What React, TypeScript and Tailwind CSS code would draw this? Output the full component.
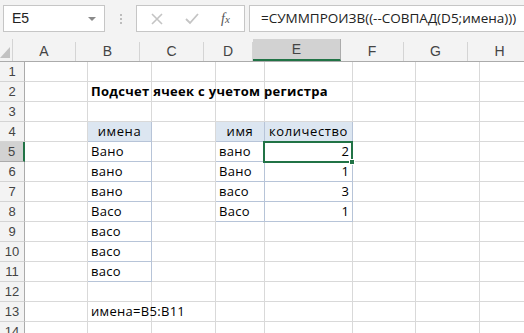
import React from "react";

const cols = [
  { id: "A", w: 63 },
  { id: "B", w: 64 },
  { id: "C", w: 64 },
  { id: "D", w: 49 },
  { id: "E", w: 88 },
  { id: "F", w: 63 },
  { id: "G", w: 64 },
  { id: "H", w: 64 },
];

type Cell = { text: string; align?: "left" | "center" | "right"; bold?: boolean; head?: boolean };

const data: Record<string, Cell> = {
  B2: { text: "Подсчет ячеек с учетом регистра", bold: true },
  B4: { text: "имена", align: "center", head: true },
  D4: { text: "имя", align: "center", head: true },
  E4: { text: "количество", align: "center", head: true },
  B5: { text: "Вано" },
  B6: { text: "вано" },
  B7: { text: "вано" },
  B8: { text: "Васо" },
  B9: { text: "васо" },
  B10: { text: "васо" },
  B11: { text: "васо" },
  D5: { text: "вано" },
  D6: { text: "Вано" },
  D7: { text: "васо" },
  D8: { text: "Васо" },
  E5: { text: "2", align: "right" },
  E6: { text: "1", align: "right" },
  E7: { text: "3", align: "right" },
  E8: { text: "1", align: "right" },
  B13: { text: "имена=B5:B11" },
};

const rows = Array.from({ length: 14 }, (_, i) => i + 1);

function cellBorders(col: string, row: number) {
  // table borders (blue-grey) for the two little tables
  let cls = "border-r border-b border-[#d9d9d9]";
  if (col === "B" && row >= 4 && row <= 11) cls = "border-r border-b border-[#b7c4d8]";
  if ((col === "D" || col === "E") && row >= 4 && row <= 8) cls = "border-r border-b border-[#b7c4d8]";
  return cls;
}

export default function App() {
  return (
    <div className="w-[524px] h-[333px] overflow-hidden bg-white font-['Open_Sans',sans-serif] text-black">
      {/* formula bar */}
      <div className="h-[39px] bg-[#f3f3f3] flex items-start pt-[5px] pl-[3px]">
        <div className="w-[102px] h-[27px] bg-white border border-[#c6c6c6] flex items-center justify-between px-[8px]">
          <span className="text-[14px] text-[#222] font-['Liberation_Sans',sans-serif]">E5</span>
          <span className="w-0 h-0 border-l-[4px] border-r-[4px] border-t-[4px] border-l-transparent border-r-transparent border-t-[#8a8a8a]" />
        </div>
        <div className="w-[31px] h-[27px] flex flex-col items-center justify-center gap-[2px]">
          <span className="w-[2px] h-[2px] bg-[#bdbdbd]" />
          <span className="w-[2px] h-[2px] bg-[#bdbdbd]" />
          <span className="w-[2px] h-[2px] bg-[#bdbdbd]" />
        </div>
        <div className="w-[109px] h-[27px] bg-white border border-[#c6c6c6] flex items-center">
          <svg width="12" height="12" viewBox="0 0 12 12" className="ml-[14px]">
            <path d="M1 1 L11 11 M11 1 L1 11" stroke="#c4c4c4" strokeWidth="1.6" fill="none" />
          </svg>
          <svg width="14" height="12" viewBox="0 0 14 12" className="ml-[22px]">
            <path d="M1 6 L5 10 L13 1" stroke="#c4c4c4" strokeWidth="1.8" fill="none" />
          </svg>
          <span className="ml-[22px] text-[14px] italic text-[#555] font-['Liberation_Serif',serif]">
            f<span className="text-[11px]">x</span>
          </span>
        </div>
        <div className="ml-[4px] flex-1 h-[27px] bg-white border border-[#c6c6c6] border-r-0 flex items-center pl-[11px]">
          <span className="text-[13.5px] text-[#222] whitespace-nowrap">
            =СУММПРОИЗВ((--СОВПАД(D5;имена)))
          </span>
        </div>
      </div>

      {/* column headers */}
      <div className="flex h-[23px] bg-[#f3f3f3] border-b border-[#ababab]">
        <div className="w-[25px] h-full border-r border-[#d4d4d4] flex items-end justify-end pr-[2px] pb-[3px]">
          <svg width="10" height="11" viewBox="0 0 10 11">
            <path d="M10 0 L10 11 L0 11 Z" fill="#c2c2c2" />
          </svg>
        </div>
        {cols.map((c) => (
          <div
            key={c.id}
            style={{ width: c.w }}
            className={
              "shrink-0 flex items-center justify-center text-[14px] text-[#444] font-['Liberation_Sans',sans-serif] " +
              (c.id === "E"
                ? "bg-[#d2d2d2] border-b-2 border-b-[#217346] border-r border-r-[#ababab]"
                : "border-r border-[#d4d4d4] mt-[3px]")
            }
          >
            {c.id}
          </div>
        ))}
      </div>

      {/* grid */}
      {rows.map((r) => (
        <div key={r} className="flex h-[20px]">
          <div
            className={
              "w-[25px] shrink-0 flex items-center justify-center text-[13px] text-[#444] font-['Liberation_Sans',sans-serif] border-b " +
              (r === 5
                ? "bg-[#d2d2d2] border-b-[#ababab] border-r-2 border-r-[#217346]"
                : "bg-[#f3f3f3] border-b-[#d4d4d4] border-r border-r-[#ababab]")
            }
          >
            {r}
          </div>
          {cols.map((c) => {
            const cell = data[c.id + r];
            const align = cell?.align ?? "left";
            return (
              <div
                key={c.id}
                style={{ width: c.w }}
                className={
                  "relative shrink-0 flex items-center overflow-visible whitespace-nowrap text-[13px] px-[3px] " +
                  cellBorders(c.id, r) +
                  (cell?.head ? " bg-[#dce6f1]" : "") +
                  (align === "center" ? " justify-center tracking-[0.6px]" : align === "right" ? " justify-end" : " justify-start tracking-[0.3px]") +
                  (cell?.bold ? " font-bold z-10 tracking-[0.1px]" : "")
                }
              >
                {cell?.text}
                {c.id === "E" && r === 5 && (
                  <div className="absolute z-20 -left-[2px] -top-[1px] w-[90px] h-[22px] border-2 border-[#217346] pointer-events-none">
                    <div className="absolute -right-[4px] -bottom-[4px] w-[6px] h-[6px] bg-[#217346] border border-white" />
                  </div>
                )}
              </div>
            );
          })}
        </div>
      ))}
    </div>
  );
}
